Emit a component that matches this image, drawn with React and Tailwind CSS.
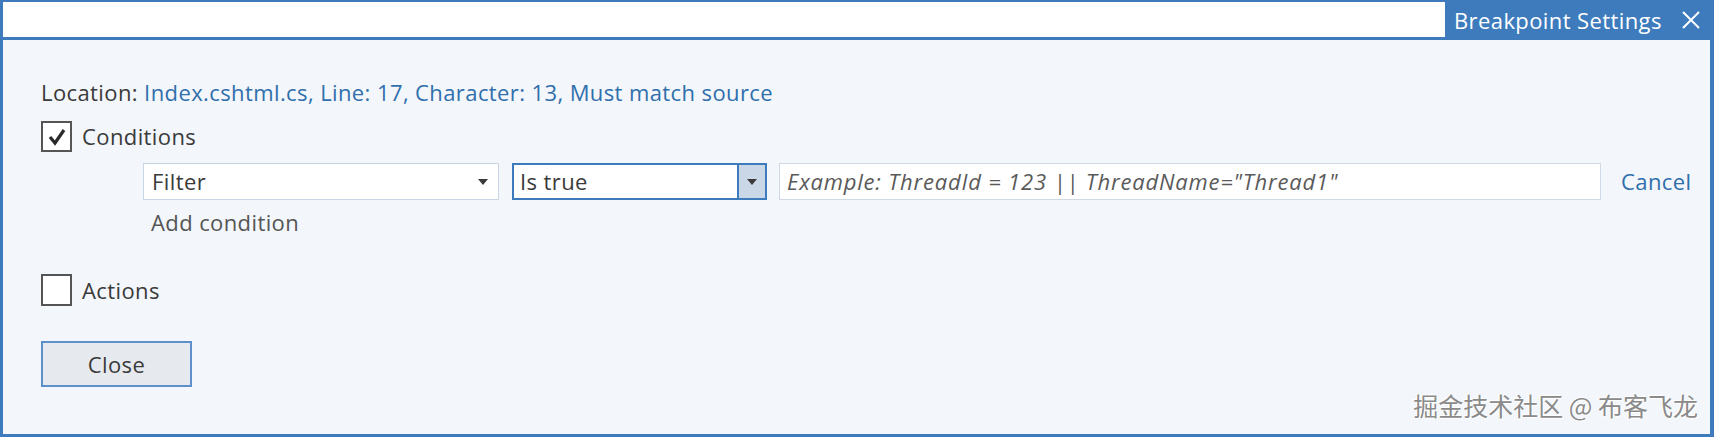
import React from "react";

function Caret() {
  return (
    <svg width="10" height="6" viewBox="0 0 10 6">
      <path d="M0 0 L10 0 L5 6 Z" fill="#3a3a3a" />
    </svg>
  );
}

export default function App() {
  return (
    <div
      className="w-[1714px] h-[437px] flex flex-col border-l-[3px] border-r-[4px] border-b-[3px] border-[#3d7bbd] bg-[#f3f6fa] text-[22px] tracking-[0.4px] text-[#3a3a3a]"
      style={{ fontFamily: '"Open Sans", "Noto Sans", sans-serif' }}
    >
      <div className="h-[40px] shrink-0 flex justify-end bg-white border-t-2 border-b-[3px] border-[#3d7bbd]">
        <div className="w-[265px] bg-[#3d7bbd] text-white flex items-center pl-[9px] pr-[8px] justify-between -my-[2px] h-[40px]">
          <span className="leading-none">Breakpoint Settings</span>
          <svg width="18" height="18" viewBox="0 0 18 18" className="mr-[2px]">
            <path d="M1 1 L17 17 M17 1 L1 17" stroke="white" strokeWidth="2" />
          </svg>
        </div>
      </div>
      <div className="flex-1 relative pl-[38px]">
        <div className="pt-[38px] h-[66px] leading-[28px]">
          <span>Location: </span>
          <span className="text-[#2f6fac]">Index.cshtml.cs, Line: 17, Character: 13, Must match source</span>
        </div>
        <div className="mt-[15px] flex items-center h-[31px]">
          <div className="w-[31px] h-[31px] border-2 border-[#555] bg-white flex items-center justify-center">
            <svg width="20" height="18" viewBox="0 0 20 18">
              <path d="M3 9 L8 15 L17 2" stroke="#2b2b2b" strokeWidth="3.2" fill="none" />
            </svg>
          </div>
          <span className="ml-[10px]">Conditions</span>
        </div>
        <div className="mt-[11px] ml-[102px] flex items-center h-[37px]">
          <div className="w-[356px] h-[37px] bg-white border border-[#c7d5e4] flex items-center justify-between pl-[8px] pr-[10px]">
            <span>Filter</span>
            <Caret />
          </div>
          <div className="ml-[13px] w-[255px] h-[37px] bg-white border-2 border-[#3d7bbd] flex items-center">
            <span className="pl-[6px] flex-1">Is true</span>
            <div className="w-[28px] h-full bg-[#c9d7e6] border-l-2 border-[#3d7bbd] flex items-center justify-center">
              <Caret />
            </div>
          </div>
          <div className="ml-[12px] w-[822px] h-[37px] bg-white border border-[#cfdae6] flex items-center pl-[7px]">
            <span className="italic text-[#5a5a5a] tracking-[0.8px] text-[22px]">
              Example: ThreadId = 123 || ThreadName="Thread1"
            </span>
          </div>
          <span className="ml-[20px] text-[#2f6fac]">Cancel</span>
        </div>
        <div className="mt-[8px] ml-[110px] h-[28px] leading-[28px] text-[#555]">Add condition</div>
        <div className="mt-[38px] flex items-center h-[32px]">
          <div className="w-[31px] h-[32px] border-2 border-[#555] bg-white" />
          <span className="ml-[10px]">Actions</span>
        </div>
        <button className="mt-[35px] w-[151px] h-[46px] border-2 border-[#5b90c9] bg-[#e6eaef] flex items-center justify-center text-[#3a3a3a]">
          Close
        </button>
        <div
          className="absolute right-[12px] bottom-[10px] text-[25px] tracking-normal text-[#8a8a8a] [text-shadow:1px_1px_0_#ffffff,-1px_-1px_0_#ffffff]"
          style={{ fontFamily: '"Noto Sans CJK SC", sans-serif' }}
        >
          掘金技术社区 @ 布客飞龙
        </div>
      </div>
    </div>
  );
}
